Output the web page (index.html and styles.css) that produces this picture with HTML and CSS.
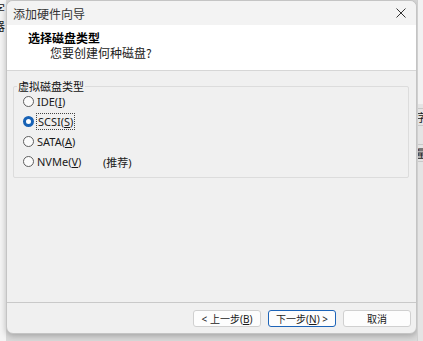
FILE: index.html
```html
<!DOCTYPE html>
<html lang="zh-CN">
<head>
  <meta charset="UTF-8">
  <title>添加硬件向导</title>
  <link rel="stylesheet" href="styles.css">
</head>
<body>
  <div class="desk-left">
    <span>字</span>
    <span>器</span>
  </div>

  <div class="dialog">
    <div class="titlebar">
      <span class="title">添加硬件向导</span>
      <svg class="close" width="10" height="10" viewBox="0 0 10 10">
        <path d="M0.5 0.5 L9.5 9.5 M9.5 0.5 L0.5 9.5" stroke="#333" stroke-width="1"/>
      </svg>
    </div>

    <div class="header">
      <div class="heading">选择磁盘类型</div>
      <div class="subheading">您要创建何种磁盘?</div>
    </div>

    <div class="content">
      <div class="group">
        <span class="legend">虚拟磁盘类型</span>
        <label class="option"><span class="radio"></span>IDE(<u>I</u>)</label>
        <label class="option"><span class="radio checked"></span><span class="focus">SCSI(<u>S</u>)</span></label>
        <label class="option"><span class="radio"></span>SATA(<u>A</u>)</label>
        <label class="option"><span class="radio"></span><span class="nvme">NVMe(<u>V</u>)</span>(推荐)</label>
      </div>
    </div>

    <div class="footer">
      <button class="btn">&lt; 上一步(<u>B</u>)</button>
      <button class="btn primary">下一步(<u>N</u>) &gt;</button>
      <button class="btn">取消</button>
    </div>
  </div>

  <div class="desk-right">
    <span class="tick">字</span>
    <span class="tick">量</span>
  </div>
</body>
</html>
```

FILE: styles.css
```css
/* Base */
* {
  margin: 0;
  padding: 0;
  box-sizing: border-box;
}

body {
  width: 423px;
  height: 341px;
  overflow: hidden;
  display: flex;
  background-color: #dadada;
  font-family: "Noto Sans", "Noto Sans CJK SC", sans-serif;
  font-size: 11px;
  color: #1a1a1a;
}

/* Background app peeking out at the sides */
.desk-left {
  width: 6px;
  background: #f4f4f4;
  display: flex;
  flex-direction: column;
  gap: 4px;
  padding-top: 2px;
  overflow: hidden;
  font-family: "Noto Sans CJK SC", sans-serif;
  font-size: 12px;
  line-height: 13px;
  text-indent: -7px;
}

.desk-right {
  width: 6px;
  height: 341px;
  background: linear-gradient(#f2f2f2 0 104px, #e4e4e4 104px);
  border-left: 1px solid #cfcfcf;
  display: flex;
  flex-direction: column;
  padding-top: 108px;
  gap: 18px;
  overflow: hidden;
  font-family: "Noto Sans CJK SC", sans-serif;
  font-size: 11px;
}

.tick {
  text-indent: -2px;
  border-top: 1px solid #c8c8c8;
  border-bottom: 1px solid #c8c8c8;
}

/* Dialog window */
.dialog {
  width: 411px;
  height: 334px;
  display: flex;
  flex-direction: column;
  background: #f0f0f0;
  border: 1px solid #c4c4c4;
  border-radius: 7px;
  box-shadow: 0 2px 6px rgba(0, 0, 0, 0.25);
  overflow: hidden;
}

.titlebar {
  height: 24px;
  display: flex;
  align-items: center;
  justify-content: space-between;
  padding: 0 10px 0 6px;
  background: #f3f3f3;
  font-family: "Noto Sans CJK SC", sans-serif;
  font-size: 12px;
  color: #333;
}

.header {
  height: 46px;
  background: #ffffff;
  border-bottom: 1px solid #d6d6d6;
  padding: 5px 0 0 21px;
  font-family: "Noto Sans CJK SC", sans-serif;
  font-size: 12px;
  line-height: 15px;
}

.heading {
  font-weight: bold;
  color: #000;
}

.subheading {
  padding-left: 22px;
  color: #222;
}

.content {
  flex: 1;
  padding: 15px 7px 0 6px;
}

/* Group box */
.group {
  position: relative;
  height: 92px;
  border: 1px solid #dcdcdc;
  border-radius: 2px;
  padding: 6px 0 0 9px;
  display: flex;
  flex-direction: column;
  gap: 3px;
}

.legend {
  position: absolute;
  top: -8px;
  left: 3px;
  padding: 0 1px;
  background: #f0f0f0;
  font-family: "Noto Sans CJK SC", sans-serif;
  font-size: 11px;
  line-height: 14px;
  color: #111;
}

.option {
  display: flex;
  align-items: center;
  height: 17px;
  font-size: 11px;
  color: #1a1a1a;
}

.option u {
  text-decoration-thickness: 1px;
  text-underline-offset: 1px;
}

.radio {
  width: 11px;
  height: 11px;
  border: 1px solid #5f5f5f;
  border-radius: 50%;
  margin-right: 3px;
  background: #fbfbfb;
}

.radio.checked {
  border: 3px solid #1862b5;
  background: #ffffff;
}

.focus {
  outline: 1px dotted #444;
  padding: 0 1px;
}

.nvme {
  width: 66px;
}

/* Buttons row */
.footer {
  height: 31px;
  border-top: 1px solid #c9c9c9;
  display: flex;
  justify-content: flex-end;
  align-items: flex-start;
  gap: 7px;
  padding: 7px 5px 0 0;
}

.btn {
  width: 68px;
  height: 17px;
  background: #fdfdfd;
  border: 1px solid #d0d0d0;
  border-radius: 3px;
  font-family: "Noto Sans", "Noto Sans CJK SC", sans-serif;
  font-size: 10px;
  color: #1a1a1a;
  line-height: 14px;
}

.btn.primary {
  border-color: #1d64b8;
}
```
